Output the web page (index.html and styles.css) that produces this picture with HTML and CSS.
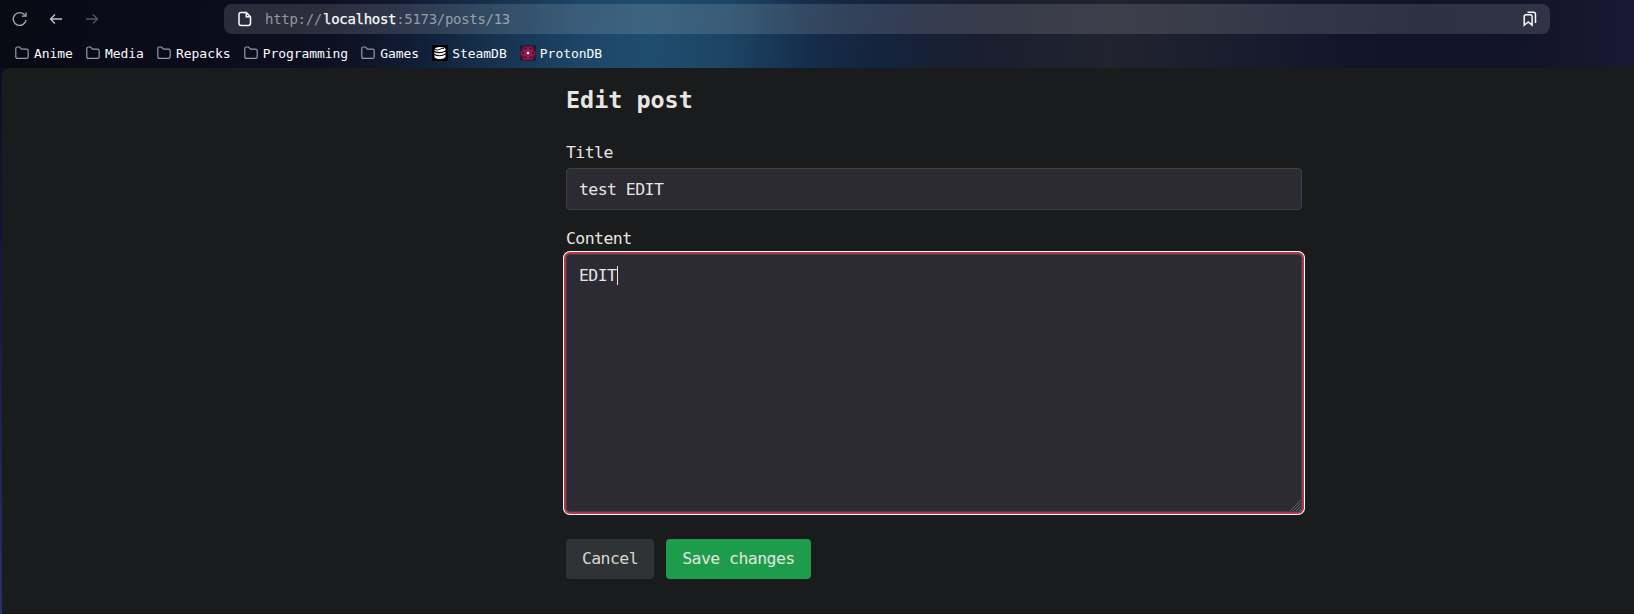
FILE: index.html
```html
<!DOCTYPE html>
<html lang="en">
<head>
<meta charset="utf-8">
<title>Edit post</title>
<link rel="stylesheet" href="styles.css">
</head>
<body>
<header class="chrome">
  <div class="toolbar">
    <nav class="nav">
      <svg width="16" height="16" viewBox="0 0 16 16" class="ic"><path d="M14 9A6.4 6.4 0 1 1 12.8 4.2M14 1.4V5.2H9.9"/></svg>
      <svg width="16" height="16" viewBox="0 0 16 16" class="ic back"><path d="M14 8H2.5M7 3.5L2.5 8L7 12.5"/></svg>
      <svg width="16" height="16" viewBox="0 0 16 16" class="ic off"><path d="M2 8H13.5M9 3.5L13.5 8L9 12.5"/></svg>
    </nav>
    <div class="urlbar">
      <svg width="16" height="16" viewBox="0 0 16 16" class="ic page"><path d="M4 1.5H9.3L13.5 5.7V12.3Q13.5 14.5 11.3 14.5H4.2Q2 14.5 2 12.3V3.7Q2 1.5 4 1.5ZM9.3 1.7V5.8H13.3"/></svg>
      <div class="url"><span class="scheme">http://</span><b>localhost</b><span>:5173/posts/13</span></div>
      <svg width="16" height="16" viewBox="0 0 16 16" class="ic marks"><path d="M2.2 14.2V5.5Q2.2 3.7 4 3.7H8.3Q10.1 3.7 10.1 5.5V14.2L6.2 11ZM5.5 1.3H11.3Q13.5 1.3 13.5 3.5V12"/></svg>
    </div>
  </div>
  <div class="bookmarks">
    <a><svg width="14" height="14" viewBox="0 0 14 14" class="ic fold"><path d="M.8 10.8V2.6Q.8 1 2.4 1H4.5L6.6 3.1H11.5Q13.2 3.1 13.2 4.8V10.8Q13.2 12.4 11.5 12.4H2.4Q.8 12.4.8 10.8Z"/></svg><span>Anime</span></a>
    <a><svg width="14" height="14" viewBox="0 0 14 14" class="ic fold"><path d="M.8 10.8V2.6Q.8 1 2.4 1H4.5L6.6 3.1H11.5Q13.2 3.1 13.2 4.8V10.8Q13.2 12.4 11.5 12.4H2.4Q.8 12.4.8 10.8Z"/></svg><span>Media</span></a>
    <a><svg width="14" height="14" viewBox="0 0 14 14" class="ic fold"><path d="M.8 10.8V2.6Q.8 1 2.4 1H4.5L6.6 3.1H11.5Q13.2 3.1 13.2 4.8V10.8Q13.2 12.4 11.5 12.4H2.4Q.8 12.4.8 10.8Z"/></svg><span>Repacks</span></a>
    <a><svg width="14" height="14" viewBox="0 0 14 14" class="ic fold"><path d="M.8 10.8V2.6Q.8 1 2.4 1H4.5L6.6 3.1H11.5Q13.2 3.1 13.2 4.8V10.8Q13.2 12.4 11.5 12.4H2.4Q.8 12.4.8 10.8Z"/></svg><span>Programming</span></a>
    <a><svg width="14" height="14" viewBox="0 0 14 14" class="ic fold"><path d="M.8 10.8V2.6Q.8 1 2.4 1H4.5L6.6 3.1H11.5Q13.2 3.1 13.2 4.8V10.8Q13.2 12.4 11.5 12.4H2.4Q.8 12.4.8 10.8Z"/></svg><span>Games</span></a>
    <a class="site"><svg width="16" height="16" viewBox="0 0 16 16"><path fill="#000" d="M0 0h16v16H0z"/><path fill="#fff" d="M2.5 4.5Q3 2 8 2T13.5 4V11.5Q12.5 14 8 14T2.5 12Z"/><path d="M2 6.2Q8 9.3 14 5.7M2 9.3Q8 12.4 14 8.8" fill="none" stroke="#000" stroke-width="1.1"/><path d="M2 4.2Q6 6 8 4.3T12 3.6" fill="none" stroke="#000" stroke-width=".9"/></svg><span>SteamDB</span></a>
    <a class="site"><svg width="16" height="16" viewBox="0 0 16 16"><path fill="#202035" d="M0 0h16v16H0z"/><g fill="none" stroke="#c90d55" stroke-width="1.1"><circle cx="8" cy="8" r="3.4"/><circle cx="3.2" cy="8" r="2"/><circle cx="12.8" cy="8" r="2"/><circle cx="5.6" cy="3.8" r="2"/><circle cx="10.4" cy="3.8" r="2"/><circle cx="5.6" cy="12.2" r="2"/><circle cx="10.4" cy="12.2" r="2"/></g><circle cx="8" cy="8" r="1.5" fill="#fff"/></svg><span>ProtonDB</span></a>
  </div>
</header>
<main class="view">
  <form class="form">
    <h1>Edit post</h1>
    <label>Title</label>
    <div class="field">test EDIT</div>
    <label>Content</label>
    <div class="field area"><span>EDIT</span><i class="caret"></i>
      <svg class="grip" width="11" height="11" viewBox="0 0 11 11"><path d="M0 11L11 0M3 11L11 3M6 11L11 6M9 11L11 9"/></svg>
    </div>
    <div class="actions"><button type="button">Cancel</button><button type="button" class="save">Save changes</button></div>
  </form>
</main>
</body>
</html>
```
FILE: styles.css
```css
* { box-sizing: border-box; }
body {
  margin: 0;
  height: 614px;
  display: flex;
  flex-direction: column;
  overflow: hidden;
  font-family: "DejaVu Sans Mono", "Liberation Mono", monospace;
  background: linear-gradient(180deg, #0b0b1a, #15183a 45%, #2a3068);
}
.chrome {
  height: 68px;
  flex: none;
  color: #fbfbfe;
  background: linear-gradient(93deg, #0a0a14 0, #0b0b1c 200px, #0d1022 330px, #101c34 410px, #163350 500px, #1c4567 580px, #1f4d6e 650px, #1c4464 730px, #152d4b 810px, #14233d 880px, #191f30 980px, #21232f 1110px, #1b1e2e 1210px, #14182c 1310px, #101329 1420px, #12142a 1520px, #1a1833 1634px);
}
.ic { fill: none; stroke: currentColor; stroke-width: 1.3; flex: none; }
.toolbar { display: flex; height: 38px; }
.nav { width: 224px; flex: none; display: flex; gap: 20px; padding: 11px 0 0 12px; color: #adadb3; }
.back { color: #c4c4c9; }
.off { color: #55555e; }
.urlbar {
  width: 1326px;
  height: 30px;
  margin-top: 4px;
  padding: 0 12px 0 13px;
  border-radius: 8px;
  background: rgba(255, 255, 255, .13);
  display: flex;
  align-items: center;
}
.page, .marks { stroke-width: 1.5; }
.url { flex: 1; margin-left: 12px; font-size: 14px; letter-spacing: -.3px; line-height: 30px; color: rgba(251, 251, 254, .5); white-space: pre; }
.url b { font-weight: 400; color: #fbfbfe; -webkit-text-stroke: .25px; }
.scheme { display: inline-block; width: 58px; }
.bookmarks { display: flex; height: 30px; padding-left: 15px; font-size: 13px; letter-spacing: -.06px; line-height: 30px; }
.bookmarks a { display: flex; align-items: center; gap: 5px; margin-right: 13.2px; }
.bookmarks span { padding-top: 1px; }
.bookmarks .site { gap: 4px; }
.fold { color: #9a9aa3; stroke-width: 1.2; }
.view {
  flex: 1;
  margin-left: 2px;
  padding: 16px 0 0 564px;
  border-radius: 8px 0 0 0;
  border-bottom: 1px solid #151213;
  background: #1a1b1c;
  color: #e8e6e3;
}
.form { width: 736px; font-size: 16.5px; letter-spacing: -.56px; }
h1 { margin: 0 0 24px; font-size: 23.4px; line-height: 32px; letter-spacing: 0; }
label { display: block; height: 28px; line-height: 26px; }
.field {
  position: relative;
  height: 42px;
  margin-bottom: 16px;
  padding: 8px 12px;
  line-height: 26px;
  border: 1px solid #3c4144;
  border-radius: 4px;
  background: #2c2a33;
}
.area { height: 258px; margin-bottom: 27px; display: flex; box-shadow: 0 0 0 2px #b3364b, 0 0 0 3px #fff; }
.caret { width: 1px; height: 19px; margin-top: 3px; background: #e8e6e3; }
.grip { position: absolute; right: 0; bottom: 0; fill: none; stroke: #73737a; stroke-width: .8; }
.actions { display: flex; gap: 12px; }
button {
  height: 40px;
  width: 88px;
  padding: 0 0 2px;
  border: 0;
  border-radius: 4px;
  font: inherit;
  letter-spacing: inherit;
  color: #d9d6d1;
  background: #303336;
}
.save { width: 145px; background: #1d9d4c; color: #e1e7df; }
```
